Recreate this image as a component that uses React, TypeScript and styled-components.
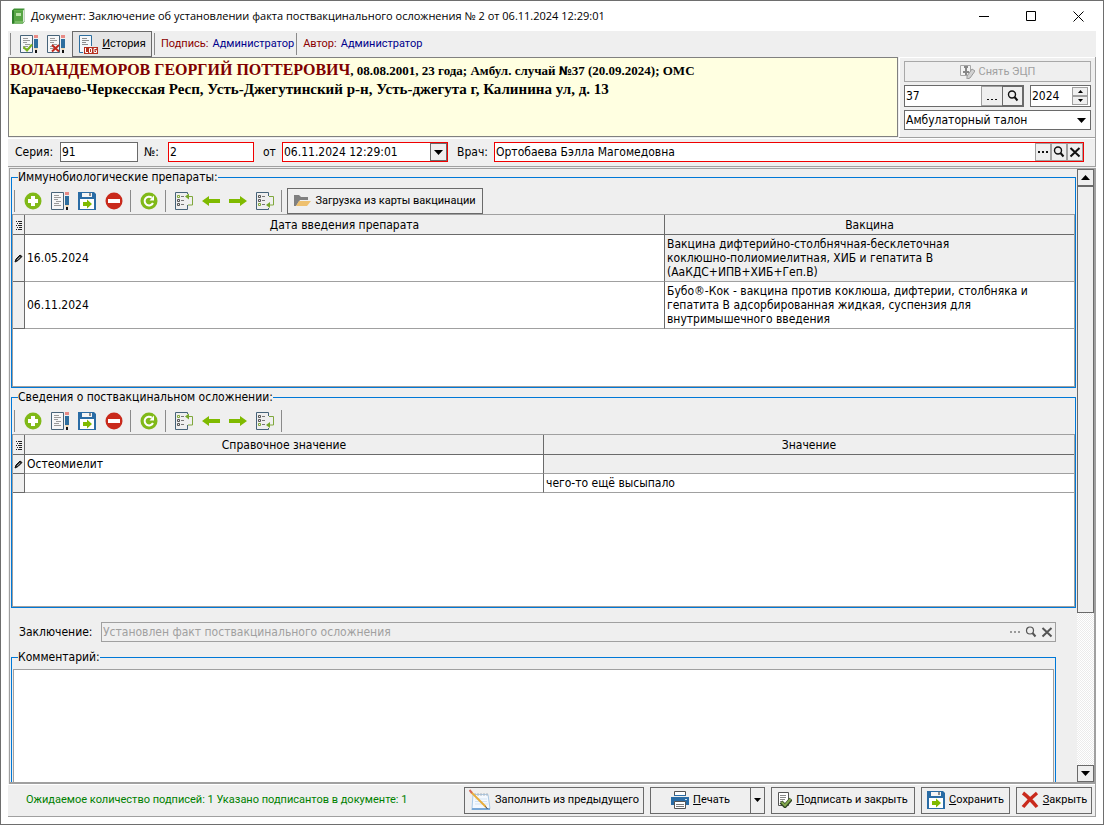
import React from 'react';
import styled, { createGlobalStyle, css } from 'styled-components';

const GlobalStyle = createGlobalStyle`
  *, *::before, *::after { box-sizing: border-box; }
  body { margin: 0; font: 12px/14px "DejaVu Sans Condensed", "DejaVu Sans", sans-serif; color: #000; }
  button, input, select, textarea { font: inherit; color: inherit; margin: 0; padding: 0; border-radius: 0; outline: none; }
  button { display: inline-flex; align-items: center; justify-content: center; cursor: default; }
  svg { display: block; flex: none; }
`;

const small = css`
  font-family: Roboto, "Liberation Sans", sans-serif;
  font-size: 11px;
`;

/* ---------- window frame ---------- */

const Window = styled.main`
  display: flex;
  flex-direction: column;
  height: 100vh;
  min-height: 480px;
  border: 1px solid #6e6e6e;
  background: #fff;
  padding: 0 7px 7px;
`;

const TitleBar = styled.header`
  display: flex;
  align-items: center;
  height: 30px;
  flex: none;
  padding-left: 3px;
`;

const Title = styled.h1`
  margin: 0 0 0 6px;
  flex: 1;
  font: 400 11px/16px "Open Sans", "Noto Sans", sans-serif;
  white-space: nowrap;
`;

const CaptionButton = styled.button`
  width: 47px;
  height: 30px;
  border: 0;
  background: none;
  &:last-child { margin-right: -6px; }
`;

const Client = styled.div`
  display: flex;
  flex-direction: column;
  flex: 1;
  min-height: 0;
  background: #efefef;
  border-bottom: 1px solid #a0a0a0;
`;

const TopBar = styled.div`
  display: flex;
  align-items: center;
  height: 26px;
  flex: none;
`;

const Divider = styled.span`
  width: 1px;
  height: 22px;
  flex: none;
  background: #8a8a8a;
  margin: 0 5px 0 2px;
`;

const IconButton = styled.button`
  width: 27px;
  height: 24px;
  border: 0;
  padding-right: 1px;
  background: none;
  flex: none;
`;

const PushButton = styled.button<{ $width?: number; $height?: number }>`
  ${small}
  width: ${p => (p.$width ? `${p.$width}px` : 'auto')};
  height: ${p => p.$height ?? 26}px;
  flex: none;
  gap: 4px;
  border: 1px solid #6a6a6a;
  background: #efefef;
  white-space: nowrap;
  &:disabled { color: #a0a0a0; border-color: #a8a8a8; }
`;

const HistoryButton = styled(PushButton)`
  margin-left: 2px;
  background: #e5e5e5;
`;

const Signer = styled.span`
  ${small}
  padding-left: 1px;
  color: #00008b;
  white-space: nowrap;
  b { font-weight: 400; color: #8b0000; margin-right: 4px; }
`;

/* ---------- patient header ---------- */

const PatientRow = styled.section`
  display: flex;
  flex: none;
  height: 81px;
`;

const Patient = styled.div`
  flex: 1;
  min-width: 0;
  height: 80px;
  border: 1px solid #808080;
  background: #ffffe1;
  padding: 3px 1px;
  overflow: hidden;
  font: 700 13px/18px "Liberation Serif", serif;
`;

const PatientName = styled.span`
  font-size: 16px;
  color: #800000;
`;

const NumberSign = styled.span`
  font-family: "DejaVu Sans Condensed", sans-serif;
  font-size: 12px;
`;

const Address = styled.div`
  font-size: 15px;
`;

const CasePanel = styled.div`
  width: 197px;
  margin-left: 1px;
  padding: 4px 4px 0 5px;
  border: solid #a0a0a0;
  border-width: 0 1px 1px 0;
  box-shadow: inset 0 1px #fff, inset 1px 0 #fff;
  display: flex;
  flex-direction: column;
  gap: 3px;
`;

const CaseLine = styled.div`
  display: flex;
  justify-content: space-between;
`;

const Field = styled.span<{ $w?: number; $h?: number; $red?: boolean; $off?: boolean }>`
  display: flex;
  align-items: stretch;
  width: ${p => (p.$w ? `${p.$w}px` : 'auto')};
  flex: ${p => (p.$w ? 'none' : '1')};
  height: ${p => p.$h ?? 20}px;
  border: 1px solid ${p => (p.$red ? '#f00000' : p.$off ? '#a0a0a0' : '#6a6a6a')};
  background: ${p => (p.$off ? '#efefef' : '#fff')};
`;

const Input = styled.input`
  flex: 1;
  min-width: 0;
  width: 0;
  border: 0;
  background: none;
  padding-left: 1px;
  &:disabled { color: #a0a0a0; -webkit-text-fill-color: #a0a0a0; }
  &[type='number'] { appearance: textfield; }
  &::-webkit-inner-spin-button { display: none; }
`;

const Inner = styled.button<{ $w?: number; $flat?: boolean; $dark?: boolean }>`
  width: ${p => p.$w ?? 16}px;
  flex: none;
  border: ${p => (p.$flat ? '0' : `1px solid ${p.$dark ? '#6a6a6a' : '#a0a0a0'}`)};
  margin-left: ${p => (p.$dark ? '-1px' : '0')};
  background: #efefef;
`;

const Spinner = styled.span`
  display: flex;
  flex-direction: column;
  width: 16px;
  margin: 1px 2px 1px 0;
  button { flex: 1; border: 1px solid #a0a0a0; background: #efefef; }
`;

const SelectBox = styled.span`
  display: grid;
  height: 20px;
  border: 1px solid #6a6a6a;
  background: #fff;
  select, svg { grid-area: 1 / 1; }
  select { appearance: none; border: 0; background: none; padding-left: 1px; z-index: 1; }
  svg { justify-self: end; align-self: center; margin-right: 4px; }
`;

/* ---------- document fields ---------- */

const FieldBar = styled.div`
  display: flex;
  align-items: center;
  height: 29px;
  flex: none;
  padding: 0 11px 0 7px;
  border: 1px solid #a0a0a0;
  border-width: 0 1px 1px 0;
  box-shadow: inset 0 1px #fff;
`;

const Label = styled.label<{ $w: number; $gap?: number }>`
  width: ${p => p.$w}px;
  flex: none;
  margin-left: ${p => p.$gap ?? 0}px;
  white-space: nowrap;
`;

const DropButton = styled.button`
  width: 17px;
  flex: none;
  border: 1px solid #6a6a6a;
  background: #efefef;
`;

/* ---------- scrolling body ---------- */

const Body = styled.div`
  display: flex;
  flex: 1;
  min-height: 0;
  margin: 1px 0 0 1px;
  border: 1px solid #a0a0a0;
  border-right-width: 2px;
  border-bottom-width: 2px;
`;

const Content = styled.div`
  flex: 1;
  min-width: 0;
  overflow: hidden;
  padding: 1px 1px 0;
  display: flex;
  flex-direction: column;
  gap: 2px;
`;

const Group = styled.fieldset`
  min-width: 0;
  height: 218px;
  flex: none;
  margin: 0;
  padding: 0;
  border: 1px solid #0078d7;
  legend { margin-left: 6px; padding: 0; height: 15px; }
`;

const CommentGroup = styled(Group)`
  margin: 6px 20px 0 0;
  height: auto;
  flex: 1 0 140px;
`;

const GroupTools = styled.div`
  display: flex;
  align-items: center;
  height: 29px;
  padding-top: 3px;
`;

const GridArea = styled.div`
  height: 173px;
  border: 1px solid #a0a0a0;
  background: #fff;
`;

const Grid = styled.table`
  width: 100%;
  table-layout: fixed;
  border-collapse: separate;
  border-spacing: 0;
  th, td { padding: 0 2px; border: solid #a0a0a0; border-width: 0 1px 1px 0; text-align: left; }
  th { font-weight: 400; text-align: center; background: #efefef; height: 20px; border-color: #6a6a6a; }
  tr > :last-child { border-right: 0; }
`;

const Row = styled.tr<{ $h: number }>`
  height: ${p => p.$h}px;
`;

const Marker = styled.td`
  && { background: #efefef; padding: 0 0 0 1px; border-color: #6a6a6a; }
`;

const MarkerHead = styled.th`
  && { padding: 0 0 0 3px; }
`;

const Cell = styled.td<{ $grey?: boolean }>`
  background: ${p => (p.$grey ? '#efefef' : '#fff')};
  &:nth-child(2) { border-right-color: #6a6a6a; }
`;

const Wrapped = styled.div`
  max-width: 370px;
  white-space: pre-line;
`;

const Conclusion = styled.div`
  display: flex;
  align-items: center;
  flex: none;
  margin: 12px 20px 0 0;
  padding-left: 8px;
`;

const Comment = styled.textarea`
  display: block;
  width: calc(100% - 2px);
  height: 400px;
  margin: 4px 1px 0;
  padding: 2px;
  border: 1px solid #a0a0a0;
  background: #fff;
  resize: none;
`;

const Scrollbar = styled.div`
  display: flex;
  flex-direction: column;
  width: 17px;
  flex: none;
  background: repeating-conic-gradient(#fff 0% 25%, #ebebeb 0% 50%) 0 0 / 2px 2px;
`;

const ScrollButton = styled.button`
  height: 17px;
  flex: none;
  border: 1px solid #6a6a6a;
  background: #efefef;
`;

const Thumb = styled.div`
  flex: 427;
  border: 1px solid #6a6a6a;
  background: #efefef;
`;

const Track = styled.div`
  flex: 153;
`;

/* ---------- footer ---------- */

const Footer = styled.footer`
  display: flex;
  align-items: center;
  height: 32px;
  flex: none;
  gap: 6px;
  padding: 0 3px 0 18px;
  border-right: 1px solid #a0a0a0;
  box-shadow: inset 0 1px #fff;
`;

const Status = styled.output`
  ${small}
  flex: 1;
  color: #008000;
  white-space: nowrap;
`;

const Split = styled.span`
  display: flex;
  button + button { border-left: 0; }
`;

/* ---------- icons ---------- */

const Svg = ({ w, h, children }: { w: number; h: number; children: React.ReactNode }) => (
  <svg width={w} height={h} viewBox={`0 0 ${w} ${h}`} fill="none" aria-hidden="true">{children}</svg>
);

const BookIcon = () => (
  <Svg w={14} h={16}>
    <path d="M1 2.5 3 .5h10.5v13L12 15.5H1z" fill="#3d8f32" />
    <path d="M3 2h10v11H3z" fill="#6fbf55" />
    <path d="M12 14.5 13.5 13V1L12 2.5z" fill="#dfe8dc" />
    <path d="M1 2.5h11v13H1z" fill="#57a544" />
    <path d="M1 2.5h2v13H1z" fill="#2f7d2b" />
    <path d="M5 5h5v3H5z" fill="#b9e2a6" />
    <path d="M4 14h8" stroke="#9bd184" />
  </Svg>
);

const Page = () => (
  <>
    <path d="M.5.5h12v17H.5z" fill="#f6f7f8" stroke="#466379" />
    <path d="M3 3.5h5M3 5.5h7M3 7.5h4M5 9.5h5M3 11.5h5M3 13.5h7" stroke="#9a9a9a" />
  </>
);

const Pencil = () => (
  <>
    <path d="M14 0h4v3h-4z" fill="#e88b86" />
    <path d="M14 4h4v9h-4z" fill="#2e6e9e" />
    <path d="M14 13h4l-1 2h-2z" fill="#f0d9b5" />
    <path d="M15 15h2v3h-2z" fill="#111" />
  </>
);

const EditIcon = () => <Svg w={18} h={18}><Page /><Pencil /></Svg>;

const DocCheckIcon = () => (
  <Svg w={18} h={18}><Page /><Pencil /><path d="m3.5 12 3.500 3.500 5-6" stroke="#7ab51d" strokeWidth="2" /></Svg>
);

const DocCrossIcon = () => (
  <Svg w={18} h={18}><Page /><Pencil /><path d="m5 10 7 6.500M12 10l-7 6.500" stroke="#c0281c" strokeWidth="2" /></Svg>
);

const LogIcon = () => (
  <Svg w={20} h={19}>
    <path d="M5 17.500H1.500V.500H13.500V11" fill="#f4f7fa" stroke="#2e6e9e" />
    <path d="M4 3.500h5M4 5.500h7M4 7.500h4M4 9.500h6" stroke="#8c8c8c" />
    <path d="M6 12h14v7H6z" fill="#b5301f" />
    <path d="M7.500 13v4.500H10M11.500 13.500h2v4h-2zM18.500 13.500h-2.500v4h2.500v-2h-1" stroke="#fff" />
  </Svg>
);

const PlusIcon = () => (
  <Svg w={18} h={18}><circle cx="9" cy="9" r="8.500" fill="#80b918" /><path d="M9 4v10M4 9h10" stroke="#fff" strokeWidth="4" /></Svg>
);

const MinusIcon = () => (
  <Svg w={18} h={18}><circle cx="9" cy="9" r="8.500" fill="#c92a1c" /><path d="M3 9h12" stroke="#fff" strokeWidth="4" /></Svg>
);

const RefreshIcon = () => (
  <Svg w={18} h={18}>
    <circle cx="9" cy="9" r="8.500" fill="#80b918" />
    <path d="M11.800 5.600A4.400 4.400 0 1 0 13 11" stroke="#fff" strokeWidth="2" />
    <path d="M14 3.500v5H9.500z" fill="#fff" />
  </Svg>
);

const FloppyIcon = () => (
  <Svg w={18} h={18}>
    <path d="M0 0h16l2 2v16H0z" fill="#2a6ca5" />
    <path d="M4 1h10v4H4z" fill="#f5f5f5" />
    <path d="M11 1h2v3h-2z" fill="#8d8d8d" />
    <path d="M2 7h14v10H2z" fill="#fff" />
    <path d="M5 10h4V7.500l5 4.500-5 4.500V14H5z" fill="#7fba00" />
  </Svg>
);

const ListIcon = ({ down }: { down?: boolean }) => (
  <Svg w={18} h={18}>
    <path d={down ? 'M12.500 4V.500H.500v17h12V16' : 'M12.500 2V.500H.500v17h12V13'} stroke="#466379" />
    <path d={down ? 'M2.500 3.500h2v2h-2zM2.500 7.500h2v2h-2z' : 'M2.500 7.500h2v2h-2zM2.500 11.500h2v2h-2z'} stroke="#555" />
    <path d={down ? 'M2.500 11.500h2v2h-2z' : 'M2.500 3.500h2v2h-2z'} stroke="#80a83c" />
    <path d="M6 4.500h3M6 8.500h3M6 12.500h3" stroke="#777" />
    <path d={down ? 'M13 4.500h4.500v8.500H12' : 'M12 4.500h5.500V13H13'} stroke="#80a83c" />
    <path d={down ? 'M14 10v6l-4-3z' : 'M14 1.500v6l-4-3z'} fill="#76a82a" />
  </Svg>
);

const ArrowIcon = ({ right }: { right?: boolean }) => (
  <Svg w={18} h={10}>
    <path d={right ? 'M0 3h11V0l7 5-7 5V7H0z' : 'M18 3H7V0L0 5l7 5V7h11z'} fill="#7fba00" />
  </Svg>
);

const FolderIcon = () => (
  <Svg w={17} h={12}>
    <path d="M0 0h5l2 2h7v3H6l-4 6H0z" fill="#808080" />
    <path d="M5 6h12l-4 5H2z" fill="#eec06e" />
  </Svg>
);

const SealIcon = () => (
  <Svg w={15} h={14}>
    <path d="M.500.500h10v10h-10z" fill="#f4f4f4" stroke="#a8a8a8" />
    <path d="M4 2h4M6 2v5M3 7h6M6 7v3" stroke="#888" strokeWidth="2" />
    <path d="m7 11 5-7 3 2-5 7-3 1z" fill="#d2d2d2" stroke="#999" />
  </Svg>
);

const SearchIcon = ({ grey }: { grey?: boolean }) => (
  <Svg w={12} h={12}>
    <circle cx="5" cy="4.500" r="3.500" stroke={grey ? '#555' : '#111'} strokeWidth={grey ? 1.2 : 1.4} />
    <path d="m7.500 7 3 3.500" stroke={grey ? '#555' : '#111'} strokeWidth="2" />
  </Svg>
);

const CrossIcon = ({ grey }: { grey?: boolean }) => (
  <Svg w={12} h={12}><path d="m1.500 2 9 8.500M10.500 2l-9 8.500" stroke={grey ? '#555' : '#111'} strokeWidth="2" /></Svg>
);

const DotsIcon = ({ grey }: { grey?: boolean }) => (
  <Svg w={12} h={12}><path d="M1 5h2v2H1zM5 5h2v2H5zM9 5h2v2H9z" fill={grey ? '#999' : '#111'} /></Svg>
);

const LowDotsIcon = () => (
  <Svg w={12} h={12}><path d="M1 9h2v1H1zM5 9h2v1H5zM9 9h2v1H9z" fill="#111" /></Svg>
);

const Triangle = ({ up, tiny }: { up?: boolean; tiny?: boolean }) => {
  const w = tiny ? 5 : 9;
  const h = tiny ? 3 : 5;
  return <Svg w={w} h={h}><path d={up ? `M0 ${h}h${w}L${w / 2} 0z` : `M0 0h${w}L${w / 2} ${h}z`} fill="#000" /></Svg>;
};

const SmallTriangle = () => <Svg w={7} h={4}><path d="M0 0h7L3.500 4z" fill="#000" /></Svg>;

const RowsIcon = () => (
  <Svg w={7} h={10}><path d="M0 1.500h1M2 1.500h4M1 3.500h1M3 3.500h3M0 5.500h1M2 5.500h4M1 7.500h1M3 7.500h3M0 9.500h1M2 9.500h4" stroke="#222" /></Svg>
);

const RowPencil = () => (
  <Svg w={9} h={9}><path d="m1 8 1-3 4-4 2 1.500-4 4z" fill="#333" stroke="#111" /><path d="m3 6 3-3" stroke="#999" /></Svg>
);

const NotepadIcon = () => (
  <Svg w={22} h={22}>
    <path d="M4 5.500h15l2 14H3z" fill="#f4f9ff" stroke="#a9c9e6" />
    <path d="M3 19h18v2H2.500z" fill="#79a9d8" />
    <path d="M6 4v3M9 4v3M12 4v3M15 4v3M18 4v3" stroke="#b0b8c0" />
    <path d="M6 10h12M6 12.500h12M6 15h13" stroke="#d3e3f2" />
    <path d="m2 3 15 15" stroke="#e8ad3c" strokeWidth="2" />
    <path d="m.500 1 2.500 3" stroke="#d96a5a" strokeWidth="2" />
    <path d="m16.500 17.500 2 2.500" stroke="#444" />
  </Svg>
);

const PrinterIcon = () => (
  <Svg w={18} h={18}>
    <path d="M3.500 5V.500h11V5" fill="#fff" stroke="#555" />
    <path d="M0 6h18v8H0z" fill="#2a6ca5" />
    <path d="M3 4.500h12M2 8.500h2" stroke="#2a6ca5" />
    <path d="M14 8h2v1h-2z" fill="#cfe2f2" />
    <path d="M3.500 10.500h11v7h-11z" fill="#fff" stroke="#555" />
    <path d="M5 13.500h8M5 15.500h8" stroke="#777" />
  </Svg>
);

const SignIcon = () => (
  <Svg w={14} h={16}>
    <path d="M.500.500h10v13H.500z" fill="#fff" stroke="#555" />
    <path d="M2 3.500h6M2 5.500h6M2 7.500h5M2 9.500h3" stroke="#8a8a8a" />
    <path d="m3 10 4 4 6-7" stroke="#2f4323" strokeWidth="4" />
    <path d="m3.500 10 3.500 3.500L12.500 7" stroke="#83a84e" strokeWidth="2" />
  </Svg>
);

const CloseIcon = () => (
  <Svg w={18} h={18}><path d="M2 2c4 3 9 8 14 14M16 2C11 6 6 11 2 16" stroke="#c92a1c" strokeWidth="3.500" /></Svg>
);

/* ---------- page ---------- */

const RecordTools = ({ children }: { children?: React.ReactNode }) => (
  <GroupTools role="toolbar">
    <Divider />
    <IconButton aria-label="Добавить"><PlusIcon /></IconButton>
    <IconButton aria-label="Изменить"><EditIcon /></IconButton>
    <IconButton aria-label="Сохранить"><FloppyIcon /></IconButton>
    <IconButton aria-label="Удалить"><MinusIcon /></IconButton>
    <Divider />
    <IconButton aria-label="Обновить"><RefreshIcon /></IconButton>
    <Divider />
    <IconButton aria-label="Первая"><ListIcon /></IconButton>
    <IconButton aria-label="Назад"><ArrowIcon /></IconButton>
    <IconButton aria-label="Вперёд"><ArrowIcon right /></IconButton>
    <IconButton aria-label="Последняя"><ListIcon down /></IconButton>
    <Divider />
    {children}
  </GroupTools>
);

type Record = { left: string; right: string; rightGrey?: boolean };

const RecordGrid = ({ heads, rows, lastWidth, rowHeight }: {
  heads: [string, string]; rows: Record[]; lastWidth: number; rowHeight: number;
}) => (
  <GridArea>
    <Grid>
      <colgroup><col width={12} /><col /><col width={lastWidth} /></colgroup>
      <thead><tr><MarkerHead><RowsIcon /></MarkerHead><th>{heads[0]}</th><th>{heads[1]}</th></tr></thead>
      <tbody>
        {rows.map((r, i) => (
          <Row key={i} $h={rowHeight}>
            <Marker>{i === 0 && <RowPencil />}</Marker>
            <Cell>{r.left}</Cell>
            <Cell $grey={r.rightGrey}><Wrapped>{r.right}</Wrapped></Cell>
          </Row>
        ))}
      </tbody>
    </Grid>
  </GridArea>
);

const vaccines: Record[] = [
  { left: '16.05.2024', right: 'Вакцина дифтерийно-столбнячная-бесклеточная\nкоклюшно-полиомиелитная, ХИБ и гепатита В\n(АаКДС+ИПВ+ХИБ+Геп.В)', rightGrey: true },
  { left: '06.11.2024', right: 'Бубо®-Кок - вакцина против коклюша, дифтерии, столбняка и гепатита В адсорбированная жидкая, суспензия для внутримышечного введения' },
];

const complications: Record[] = [
  { left: 'Остеомиелит', right: '', rightGrey: true },
  { left: '', right: 'чего-то ещё высыпало' },
];

export default function App() {
  return (
    <Window>
      <GlobalStyle />
      <TitleBar>
        <BookIcon />
        <Title>Документ: Заключение об установлении факта поствакцинального осложнения № 2 от 06.11.2024 12:29:01</Title>
        <CaptionButton aria-label="Свернуть"><Svg w={11} h={11}><path d="M0 5.500h10" stroke="#000" /></Svg></CaptionButton>
        <CaptionButton aria-label="Развернуть"><Svg w={11} h={11}><path d="M.500.500h9v9h-9z" stroke="#000" /></Svg></CaptionButton>
        <CaptionButton aria-label="Закрыть окно"><Svg w={11} h={11}><path d="m.500.500 10 10M10.500.500l-10 10" stroke="#000" /></Svg></CaptionButton>
      </TitleBar>
      <Client>
        <TopBar role="toolbar">
          <Divider />
          <IconButton aria-label="Подписать"><DocCheckIcon /></IconButton>
          <IconButton aria-label="Снять подпись"><DocCrossIcon /></IconButton>
          <HistoryButton $width={80}><LogIcon /><span><u>И</u>стория</span></HistoryButton>
          <Divider />
          <Signer><b>Подпись:</b>Администратор</Signer>
          <Divider />
          <Signer><b>Автор:</b>Администратор</Signer>
        </TopBar>

        <PatientRow>
          <Patient>
            <div>
              <PatientName>ВОЛАНДЕМОРОВ ГЕОРГИЙ ПОТТЕРОВИЧ</PatientName>
              , 08.08.2001, 23 года; Амбул. случай <NumberSign>№</NumberSign>37 (20.09.2024); ОМС
            </div>
            <Address>Карачаево-Черкесская Респ, Усть-Джегутинский р-н, Усть-джегута г, Калинина ул, д. 13</Address>
          </Patient>
          <CasePanel>
            <PushButton disabled $height={21}><SealIcon />Снять ЭЦП</PushButton>
            <CaseLine>
              <Field $w={120} $h={22}>
                <Input aria-label="Номер случая" defaultValue="37" />
                <Inner $w={22} aria-label="Выбрать"><LowDotsIcon /></Inner>
                <Inner $w={21} $dark aria-label="Найти"><SearchIcon /></Inner>
              </Field>
              <Field $w={61} $h={22}>
                <Input type="number" aria-label="Год" defaultValue="2024" />
                <Spinner>
                  <button aria-label="Больше"><Triangle up tiny /></button>
                  <button aria-label="Меньше"><Triangle tiny /></button>
                </Spinner>
              </Field>
            </CaseLine>
            <SelectBox>
              <select aria-label="Вид случая"><option>Амбулаторный талон</option></select>
              <Triangle />
            </SelectBox>
          </CasePanel>
        </PatientRow>

        <FieldBar>
          <Label htmlFor="series" $w={45}>Серия:</Label>
          <Field $w={78}><Input id="series" defaultValue="91" /></Field>
          <Label htmlFor="number" $w={24} $gap={6}>№:</Label>
          <Field $w={86} $red><Input id="number" defaultValue="2" /></Field>
          <Label htmlFor="date" $w={19} $gap={9}>от</Label>
          <Field $w={166} $red>
            <Input id="date" defaultValue="06.11.2024 12:29:01" />
            <DropButton aria-label="Календарь"><Triangle /></DropButton>
          </Field>
          <Label htmlFor="doctor" $w={37} $gap={9}>Врач:</Label>
          <Field $red>
            <Input id="doctor" defaultValue="Ортобаева Бэлла Магомедовна" />
            <Inner aria-label="Выбрать врача"><DotsIcon /></Inner>
            <Inner aria-label="Найти врача"><SearchIcon /></Inner>
            <Inner aria-label="Очистить врача"><CrossIcon /></Inner>
          </Field>
        </FieldBar>

        <Body>
          <Content>
            <Group>
              <legend>Иммунобиологические препараты:</legend>
              <RecordTools>
                <PushButton $width={196}><FolderIcon />Загрузка из карты вакцинации</PushButton>
              </RecordTools>
              <RecordGrid heads={['Дата введения препарата', 'Вакцина']} rows={vaccines} lastWidth={409} rowHeight={47} />
            </Group>
            <Group>
              <legend>Сведения о поствакцинальном осложнении:</legend>
              <RecordTools />
              <RecordGrid heads={['Справочное значение', 'Значение']} rows={complications} lastWidth={530} rowHeight={19} />
            </Group>
            <Conclusion>
              <Label htmlFor="conclusion" $w={82}>Заключение:</Label>
              <Field $off>
                <Input id="conclusion" disabled defaultValue="Установлен факт поствакцинального осложнения" />
                <Inner $flat disabled aria-label="Выбрать заключение"><DotsIcon grey /></Inner>
                <Inner $flat disabled aria-label="Найти заключение"><SearchIcon grey /></Inner>
                <Inner $flat disabled aria-label="Очистить заключение"><CrossIcon grey /></Inner>
              </Field>
            </Conclusion>
            <CommentGroup>
              <legend>Комментарий:</legend>
              <Comment aria-label="Комментарий" />
            </CommentGroup>
          </Content>
          <Scrollbar>
            <ScrollButton aria-label="Прокрутить вверх"><Triangle up /></ScrollButton>
            <Thumb />
            <Track />
            <ScrollButton aria-label="Прокрутить вниз"><Triangle /></ScrollButton>
          </Scrollbar>
        </Body>

        <Footer>
          <Status>Ожидаемое количество подписей: 1 Указано подписантов в документе: 1</Status>
          <PushButton $width={180} $height={27}><NotepadIcon />Заполнить из предыдущего</PushButton>
          <Split>
            <PushButton $width={101} $height={27}><PrinterIcon /><span><u>П</u>ечать</span></PushButton>
            <PushButton $width={14} $height={27} aria-label="Варианты печати"><SmallTriangle /></PushButton>
          </Split>
          <PushButton $width={144} $height={27}><SignIcon /><span><u>П</u>одписать и закрыть</span></PushButton>
          <PushButton $width={89} $height={27}><FloppyIcon /><span><u>С</u>охранить</span></PushButton>
          <PushButton $width={76} $height={27}><CloseIcon /><span><u>З</u>акрыть</span></PushButton>
        </Footer>
      </Client>
    </Window>
  );
}
